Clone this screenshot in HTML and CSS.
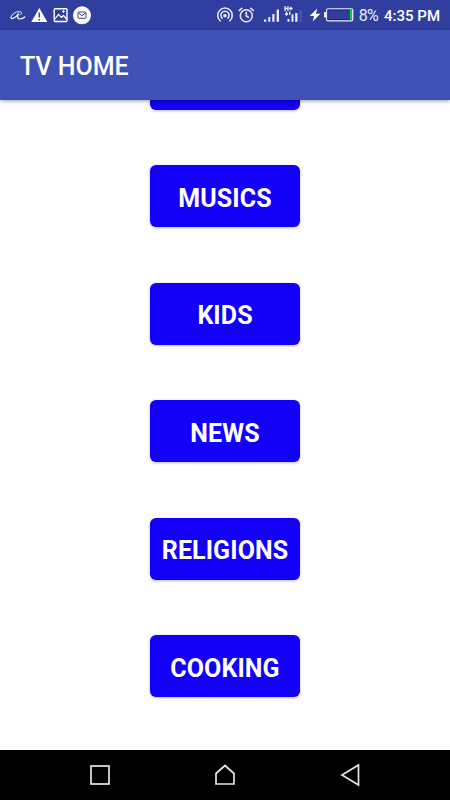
FILE: index.html
```html
<!DOCTYPE html>
<html lang="en">
<head>
  <meta charset="UTF-8">
  <title>TV HOME</title>
  <link rel="stylesheet" href="styles.css">
</head>
<body>

<div class="status-bar">
  <svg class="status-icons" width="100" height="30" viewBox="0 0 100 30">
    <!-- script a -->
    <path d="M11 17C12 14 15.500 11.500 19 11.700C22.500 11.800 22.500 13.500 19.500 15" fill="none" stroke="#fff" stroke-width=".9"/>
    <path d="M11 17C10.500 20 15.500 18.500 18.500 13.500C17.300 16 17 18.800 19.500 19C21.500 19 23.500 18.300 25.200 16.700" fill="none" stroke="#fff" stroke-width="1.200"/>
    <!-- warning -->
    <path d="M39.300 8L47.300 22H31.300Z" fill="#fff"/>
    <path d="M39.300 12.500V17.500M39.300 19V20.500" stroke="#303f9f" stroke-width="1.500"/>
    <!-- picture -->
    <rect x="54.200" y="8.700" width="12.800" height="12.800" rx="1" fill="none" stroke="#fff" stroke-width="1.400"/>
    <path d="M55 19L58.500 14.500L61.500 17.500L63.500 15.500L66.500 19" fill="none" stroke="#fff" stroke-width="1.200"/>
    <path d="M63.500 10V13M62 11.500H65" stroke="#fff" stroke-width=".8"/>
    <!-- mail -->
    <circle cx="82" cy="15.300" r="9" fill="#fff"/>
    <rect x="78" y="12" width="8" height="6.300" rx="1" fill="none" stroke="#303f9f" stroke-width="1"/>
    <path d="M78.500 13L82 15.700L85.500 13" fill="none" stroke="#303f9f" stroke-width="1"/>
  </svg>

  <div class="status-right">
    <svg width="142" height="30" viewBox="215 0 142 30">
      <!-- hotspot -->
      <g fill="none" stroke="#e8eaf6" stroke-width="1.500">
        <path d="M220.700 21.300A7.300 7.300 0 1 1 229.300 21.300"/>
        <path d="M222.600 18.600A4.100 4.100 0 1 1 227.400 18.600"/>
      </g>
      <circle cx="225" cy="15.700" r="1.800" fill="#e8eaf6"/>
      <!-- alarm -->
      <g fill="none" stroke="#e8eaf6" stroke-width="1.500">
        <circle cx="246.300" cy="15.700" r="6"/>
        <path d="M246.300 11.800V16L249 17.700M238.800 10.800L242.300 7.900M253.800 10.800L250.300 7.900"/>
      </g>
      <!-- signal -->
      <path d="M264 19.500H266.300V21.800H264ZM268.300 17H270.300V21.800H268.300ZM272.300 14H274.500V21.800H272.300ZM276.600 9.500H279V21.800H276.600Z" fill="#e8eaf6"/>
      <path d="M287.500 19H289.500V21.800H287.500ZM291.500 14.500H293.500V21.800H291.500ZM295.200 13H297.500V21.800H295.200Z" fill="#e8eaf6"/>
      <path d="M299.500 9.500H302V21.800H299.500Z" fill="#4653a8"/>
      <path d="M285 6V11M288 6V11M285 8.500H288M289 8.500H292.700M290.900 6.700V10.300M286.500 11.500V15M285.200 13.500L286.500 15L288 13.500M289.800 15V11.500" fill="none" stroke="#e8eaf6" stroke-width="1.300"/>
      <!-- charging -->
      <path d="M317.200 8.500L309.700 16H314L312.800 21.500L320.300 13.800H316Z" fill="#fff"/>
      <rect x="326.700" y="8.800" width="26" height="12" rx="1.200" fill="none" stroke="#e8eaf6" stroke-width="1.300"/>
      <rect x="324" y="12" width="2.500" height="5.500" fill="#e8eaf6"/>
      <rect x="327.900" y="10" width="23.600" height="9.600" fill="none" stroke="#14207c" stroke-width=".8"/>
      <rect x="350" y="9.700" width="1.800" height="10.200" fill="#00e43c"/>
    </svg>
    <span class="battery-level">8%</span>
    <span class="clock">4:35 PM</span>
  </div>
</div>

<header class="toolbar">
  <h1>TV HOME</h1>
</header>

<main class="channels">
  <button></button>
  <button>MUSICS</button>
  <button>KIDS</button>
  <button>NEWS</button>
  <button>RELIGIONS</button>
  <button>COOKING</button>
</main>

<nav class="nav-bar">
  <svg viewBox="0 0 24 24"><rect x="3" y="3" width="18" height="18"/></svg>
  <svg viewBox="0 0 24 24"><path d="M3 21V10.500L12 2.500L21 10.500V21Z"/></svg>
  <svg viewBox="0 0 24 24"><path d="M20.500 2L4 12L20.500 22Z"/></svg>
</nav>

</body>
</html>
```
FILE: styles.css
```css
* { box-sizing: border-box; }
body {
  margin: 0;
  height: 800px;
  display: flex;
  flex-direction: column;
  overflow: hidden;
  font-family: Roboto, "Liberation Sans", sans-serif;
  background-color: #fff;
}
.status-bar {
  height: 30px;
  flex: none;
  display: flex;
  justify-content: space-between;
  background-color: #303f9f;
  color: #fff;
}
.status-right {
  display: flex;
  align-items: center;
  padding-right: 10px;
  line-height: 30px;
}
.battery-level {
  margin-left: 2px;
  padding-top: 2px;
  font-size: 16px;
  letter-spacing: -0.7px;
  color: #e8eaf6;
}
.clock {
  margin-left: 6px;
  padding-top: 1px;
  font-size: 15px;
  font-weight: 500;
}
.toolbar {
  height: 70px;
  flex: none;
  display: flex;
  align-items: center;
  padding: 2px 20px 0;
  background-color: #3f51b5;
  box-shadow: 0 1px 4px rgba(0, 0, 0, 0.4);
  z-index: 1;
}
.toolbar h1 {
  margin: 0;
  font-size: 25px;
  font-weight: 500;
  color: #fff;
}
.channels {
  flex: 1;
  min-height: 0;
  display: flex;
  flex-direction: column;
  justify-content: flex-end;
  align-items: center;
  gap: 55.1px;
  padding-bottom: 52.6px;
  overflow: hidden;
}
.channels button {
  width: 150px;
  height: 62.4px;
  flex: none;
  padding: 3.9px 0 0;
  border: none;
  border-radius: 6px;
  background-color: #1200f7;
  box-shadow: 0 1px 3px rgba(0, 0, 0, 0.28);
  color: #fff;
  font-family: inherit;
  font-size: 25px;
  font-weight: 700;
  letter-spacing: 0.1px;
}
.nav-bar {
  height: 50px;
  flex: none;
  display: flex;
  align-items: center;
  justify-content: center;
  gap: 101px;
  background-color: #000;
}
.nav-bar svg {
  width: 24px;
  height: 24px;
  fill: none;
  stroke: #e6e6e6;
  stroke-width: 1.7;
}
```
